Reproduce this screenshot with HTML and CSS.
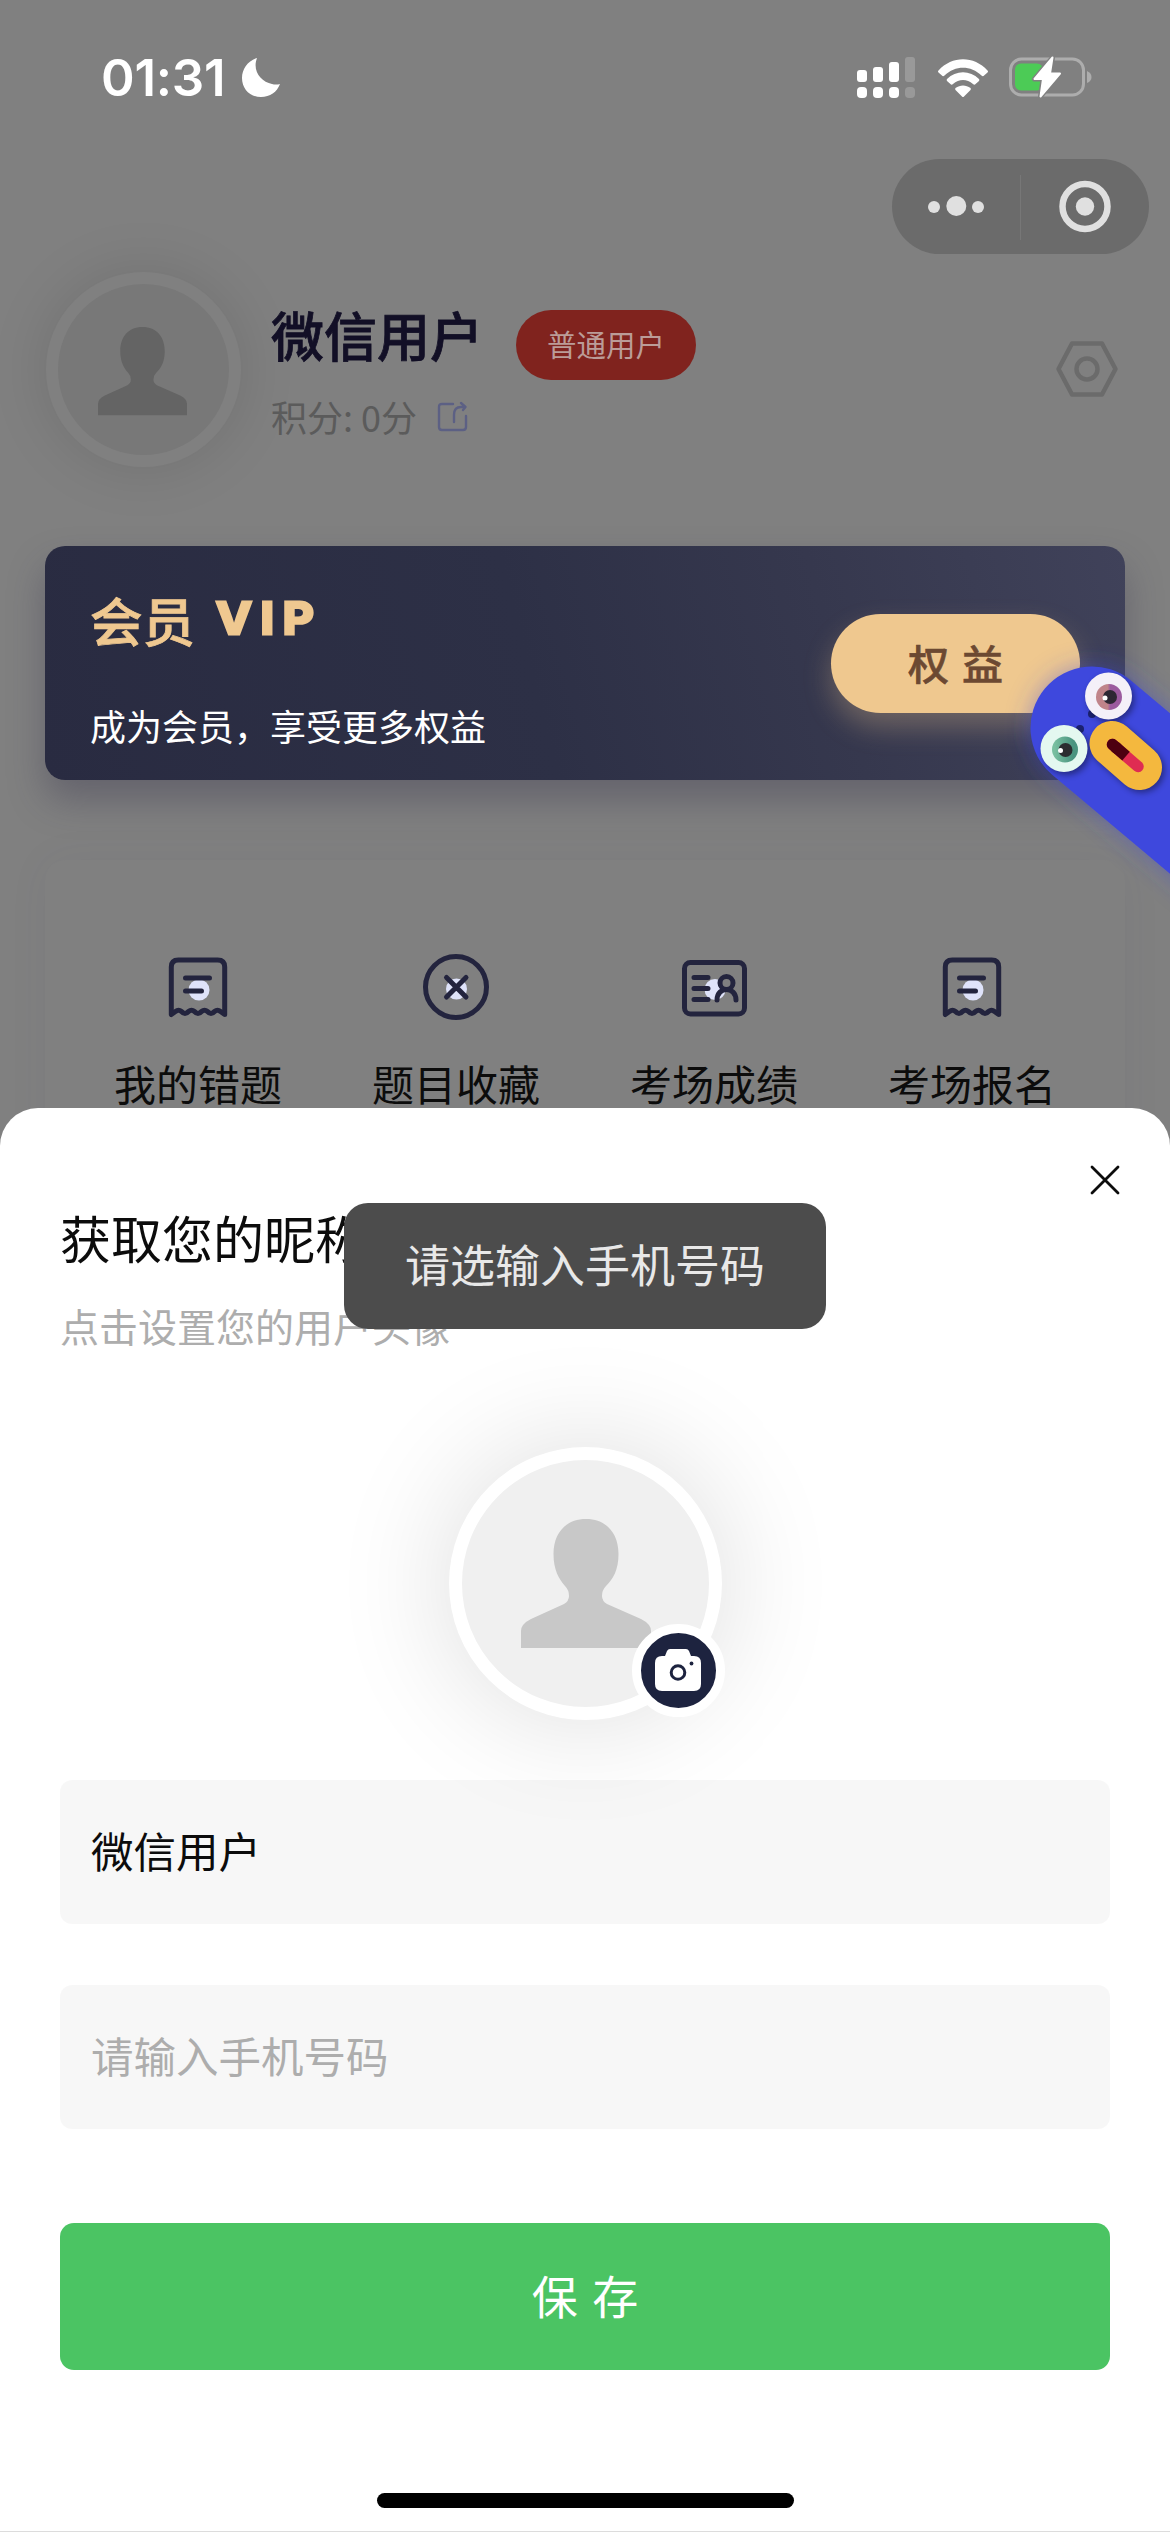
FILE: index.html
```html
<!DOCTYPE html>
<html lang="zh-CN">
<head>
<meta charset="utf-8">
<title>个人中心</title>
<link rel="stylesheet" href="styles.css">
</head>
<body>
<svg class="defs" width="0" height="0">
  <symbol id="person" viewBox="0 0 130 130">
    <path d="M65 0C44 0 32.500 15 32.500 35C32.500 51 38 60 44 67Q48 71 48 77Q48 82 43 85L10 100Q0 105 0 112V129H130V112Q130 105 120 100L86 85Q81 82 81 77Q81 71 85 67C92 60 97.500 51 97.500 35C97.500 15 86 0 65 0Z"/>
  </symbol>
  <symbol id="receipt" viewBox="0 0 66 66">
    <circle cx="34" cy="36" r="10.500" fill="#dfe3fa"/>
    <path d="M6.300 60.500V13Q6.300 6 13.300 6H52.700Q59.700 6 59.700 13V60.500L55.500 57.500Q52.500 55 49.500 57.500Q46 61.500 42.500 57.500Q39.500 55 36.500 57.500Q33 61.500 29.500 57.500Q26.500 55 23.500 57.500Q20 61.500 16.500 57.500Q13.500 55 10.500 57.500Z"/>
    <path d="M20.500 24H44.500M20.500 37H36.500"/>
  </symbol>
</svg>
<main class="screen">
  <header class="status">
    <div class="clock"><span>01:31</span>
      <svg width="40" height="40" viewBox="0 0 40 40"><path d="M16 0C7 3 1 11 1 20C1 31 9 39 20 39C29 39 36 34 39 26C37 26.500 34 27 31 26C20 24 11 13 16 0Z" fill="#fff"/></svg>
    </div>
    <div class="radio">
      <svg width="60" height="42" viewBox="0 0 60 42" fill="#fff">
        <rect x="0" y="13" width="10" height="12" rx="3"/><rect x="16" y="10" width="10" height="15" rx="3"/><rect x="32" y="5" width="10" height="20" rx="3"/><rect x="48" y="0" width="10" height="25" rx="3" opacity=".2"/>
        <rect x="0" y="30" width="10" height="11" rx="4"/><rect x="16" y="30" width="10" height="11" rx="4"/><rect x="32" y="30" width="10" height="11" rx="4"/><rect x="48" y="30" width="10" height="11" rx="4" opacity=".2"/>
      </svg>
      <svg width="52" height="40" viewBox="0 0 52 40" fill="#fff">
        <path d="M1.500 11.500C15-3.500 37-3.500 50.500 11.500Q51.500 12.500 50.500 13.500L46.500 17Q45.500 17.500 44.500 16.500C34 6 18 6 7.500 16.500Q6.500 17.500 5.500 17L1.500 13.500Q.5 12.500 1.500 11.500Z"/>
        <path d="M10 20C19 11 33 11 42 20Q42.700 21 42 22L38 25.500Q37 26 36 25C30 19.500 22 19.500 16 25Q15 26 14 25.500L10 22Q9.300 21 10 20Z"/>
        <path d="M18.500 29C23 25.500 29 25.500 33.500 29Q34.300 30 33.500 31L27 37.500Q26 38.500 25 37.500L18.500 31Q17.700 30 18.500 29Z"/>
      </svg>
      <svg width="84" height="44" viewBox="0 0 84 44">
        <rect x="1.500" y="4" width="73" height="36" rx="11" fill="none" stroke="#adadad" stroke-width="3"/>
        <path d="M78 16Q82.500 18 82.500 22T78 28Z" fill="#adadad"/>
        <rect x="6" y="8.500" width="28" height="27" rx="6" fill="#4ccb56"/>
        <path d="M43.500 2.500L25.500 24H34L31.500 41.500L51 18.500H41Z" fill="#fff" stroke="#808080" stroke-width="5" stroke-linejoin="round"/>
        <path d="M43.500 2.500L25.500 24H34L31.500 41.500L51 18.500H41Z" fill="#fff" stroke="#fff" stroke-width="2" stroke-linejoin="round"/>
      </svg>
    </div>
  </header>

  <nav class="capsule">
    <svg width="257" height="95" viewBox="0 0 257 95" fill="#e0e0e0">
      <circle cx="42" cy="48" r="6"/><circle cx="64.300" cy="47" r="10"/><circle cx="86" cy="48" r="6"/>
      <path d="M128.500 16V81" stroke="#777" stroke-width="1"/>
      <circle cx="193" cy="47.500" r="22.500" fill="none" stroke="#e0e0e0" stroke-width="6.500"/><circle cx="193" cy="47.500" r="9.200"/>
    </svg>
  </nav>

  <section class="profile">
    <div class="avatar"><svg width="89" height="89"><use href="#person"/></svg></div>
    <div class="who">
      <div class="name-row"><h1>微信用户</h1><span class="level">普通用户</span></div>
      <div class="points"><span>积分: 0分</span>
        <svg width="32" height="32" viewBox="0 0 32 32" fill="none" stroke="#5c6084" stroke-width="2.400" stroke-linecap="round" stroke-linejoin="round"><path d="M16 3H5Q2 3 2 6V26Q2 29 5 29H26Q29 29 29 26V15"/><path d="M17 21V14Q17 6 24 6H28M24 2L28.500 6L26 9"/></svg>
      </div>
    </div>
    <svg class="gear" width="64" height="60" viewBox="0 0 64 60" fill="none" stroke="#6b6b6b" stroke-width="4.500" stroke-linejoin="round"><path d="M17 4.500H47L60.500 30L47 55.500H17L3.500 30Z"/><circle cx="32" cy="30" r="10.500"/></svg>
  </section>

  <section class="vip">
    <div class="vip-text">
      <h2>会员<span>VIP</span></h2>
      <p>成为会员，享受更多权益</p>
    </div>
    <button class="perks">权 益</button>
  </section>

  <section class="menu">
    <div class="item"><svg class="line" width="66" height="66"><use href="#receipt"/></svg><span>我的错题</span></div>
    <div class="item"><svg class="line" width="66" height="66" viewBox="0 0 66 66"><circle cx="33.500" cy="35" r="10.500" fill="#dfe3fa" stroke="none"/><circle cx="33" cy="33" r="30.500"/><path d="M23.500 23.500L43 43M43 23.500L23.500 43"/></svg><span>题目收藏</span></div>
    <div class="item"><svg class="line" width="66" height="66" viewBox="0 0 66 66"><circle cx="34" cy="35.500" r="10.500" fill="#dfe3fa" stroke="none"/><rect x="3.500" y="8.500" width="60" height="51.500" rx="6"/><path d="M13 23.500H27M13 34.500H27M13 45.500H27M36 46C36 32 55 32 55 46"/><circle cx="45.500" cy="29" r="6.500" fill="#808080"/></svg><span>考场成绩</span></div>
    <div class="item"><svg class="line" width="66" height="66"><use href="#receipt"/></svg><span>考场报名</span></div>
  </section>

  <svg class="mascot" width="190" height="290" viewBox="0 0 190 290">
    <defs>
      <filter id="glow" filterUnits="userSpaceOnUse" x="920" y="560" width="500" height="500"><feGaussianBlur stdDeviation="13"/></filter>
      <filter id="soft" filterUnits="userSpaceOnUse" x="1000" y="640" width="220" height="220"><feGaussianBlur stdDeviation="3"/></filter>
      <linearGradient id="iris1"><stop offset=".45" stop-color="#c0848a"/><stop offset=".55" stop-color="#9b5a9e"/></linearGradient>
      <linearGradient id="iris2"><stop offset=".1" stop-color="#78bfa0"/><stop offset=".8" stop-color="#4a9480"/></linearGradient>
    </defs>
    <g transform="translate(-980 -610)">
      <path d="M1092 728L1260 869" stroke="#3e48dd" stroke-opacity=".5" stroke-width="120" stroke-linecap="round" filter="url(#glow)"/>
      <path d="M1092 728L1260 869" stroke="#3e48dd" stroke-width="123" stroke-linecap="round"/>
      <circle cx="1092" cy="714" r="4" fill="#1c2272"/><circle cx="1080" cy="729" r="4" fill="#1c2272"/>
      <g filter="url(#soft)" opacity=".4"><circle cx="1111" cy="699" r="23.500"/><circle cx="1067" cy="752" r="23"/><path d="M1114 746L1142 770" stroke="#000" stroke-width="45" stroke-linecap="round"/></g>
      <circle cx="1108.500" cy="696" r="23.500" fill="#f4f0f8"/><circle cx="1109" cy="697" r="13" fill="url(#iris1)"/><circle cx="1110" cy="697" r="7" fill="#2d2733"/><circle cx="1105" cy="698" r="2.500" fill="#fff"/>
      <circle cx="1064" cy="748.500" r="23.500" fill="#e4f8f0"/><circle cx="1065" cy="749.500" r="13" fill="url(#iris2)"/><circle cx="1065.500" cy="750" r="7" fill="#2b2d30"/><circle cx="1060.500" cy="750.500" r="2.500" fill="#fff"/>
      <path d="M1112 743.500L1139.500 767.500" stroke="#f4b83e" stroke-width="45" stroke-linecap="round"/>
      <path d="M1112.500 744.500L1138 766.500" stroke="#df2c52" stroke-width="11.500" stroke-linecap="round"/>
      <path d="M1112.500 744.500L1117 748.400" stroke="#4d0010" stroke-width="11.500" stroke-linecap="round"/><path d="M1115 746.700L1126 756.200" stroke="#4d0010" stroke-width="11.500"/>
    </g>
  </svg>

  <section class="sheet">
    <div class="close"><svg width="30" height="30" viewBox="0 0 30 30"><path d="M2 2L28 28M28 2L2 28" stroke="#0c0c0c" stroke-width="2.800" stroke-linecap="round"/></svg></div>
    <h3>获取您的昵称</h3>
    <p class="hint">点击设置您的用户头像</p>
    <div class="portrait">
      <svg width="130" height="130"><use href="#person"/></svg>
      <span class="camera"><svg width="46" height="43" viewBox="0 0 46 43"><path d="M7 7H10L12 2Q13 0 15 0H31Q33 0 34 2L36 7H39Q46 7 46 14V35Q46 42 39 42H7Q0 42 0 35V14Q0 7 7 7Z" fill="#fff"/><circle cx="23" cy="23.500" r="6.800" fill="none" stroke="#1d233f" stroke-width="3"/><circle cx="36.500" cy="14.500" r="1.900" fill="#1d233f"/></svg></span>
    </div>
    <div class="field">微信用户</div>
    <div class="field empty">请输入手机号码</div>
    <button class="save">保 存</button>
    <div class="home"></div>
  </section>

  <div class="toast">请选输入手机号码</div>
</main>
</body>
</html>
```
FILE: styles.css
```css
* { box-sizing: border-box; margin: 0; padding: 0; }
body { background: #808080; }
.defs { display: block; }
button { border: 0; font: inherit; }
svg { display: block; flex: none; }
.screen {
  position: relative; width: 1170px; height: 2532px; overflow: hidden;
  background: #808080; color: #0c0c0c;
  font-family: "Noto Sans CJK SC", sans-serif;
}

.status { display: flex; justify-content: space-between; height: 159px; padding: 55px 77px 0 101px; }
.clock { display: flex; gap: 14px; height: 46px; align-items: center; }
.clock span { font: 600 51px/46px Inter, sans-serif; color: #fff; letter-spacing: -.2px; width: 126px; white-space: nowrap; }
.radio { display: flex; align-items: flex-start; height: 44px; }
.radio svg:nth-child(1) { margin: 2px 20px 0 0; }
.radio svg:nth-child(2) { margin: 4px 20px 0 0; }

.capsule { width: 257px; height: 95px; margin-left: 892px; border-radius: 48px; background: #6b6b6b; }

.profile { display: flex; align-items: flex-start; height: 292px; padding: 18px 51px 0 46px; }
.avatar {
  width: 195px; height: 195px; border: 12px solid #808080; border-radius: 50%; background: #787878;
  display: flex; justify-content: center; padding: 43px 2px 0 0; color: #646464; box-shadow: 0 0 60px rgba(0, 0, 0, .12);
}
.avatar svg, .portrait > svg { fill: currentColor; }
.who { flex: 1; padding: 31px 0 0 30px; }
.name-row { display: flex; align-items: center; gap: 33px; height: 84px; }
h1 { font-size: 53px; line-height: 70px; font-weight: 500; color: #120f26; margin-top: -23px; -webkit-text-stroke: .8px #120f26; }
.level { width: 180px; height: 70px; border-radius: 35px; background: #80231e; color: #bb9c98; font-size: 29.500px; line-height: 67px; text-align: center; margin-top: -1px; }
.points { display: flex; align-items: center; gap: 20px; font-size: 36px; line-height: 46px; color: #5b5b5b; margin-top: 8px; }
.points span { margin-top: -2px; }
.gear { margin-top: 67px; }

.vip {
  display: flex; justify-content: space-between; width: 1080px; height: 234px; margin: 0 45px;
  padding: 42px 45px 0 45px; border-radius: 20px;
  background: linear-gradient(75deg, #292b41, #2d3046 45%, #36384e 72%, #40425a);
  box-shadow: 0 20px 36px rgba(50, 46, 72, .35);
}
h2 { display: flex; align-items: center; gap: 21px; font-size: 52.500px; line-height: 62px; font-weight: 500; color: #efc890; -webkit-text-stroke: .8px #efc890; }
h2 span { font: 700 44px/62px Inter, sans-serif; letter-spacing: 8px; -webkit-text-stroke: 3px #efc890; transform: scaleX(1.090); transform-origin: left; margin-top: -2px; }
.vip-text p { font-size: 36px; line-height: 50px; color: #fff; margin-top: 50px; white-space: nowrap; }
.perks { width: 249px; height: 99px; margin-top: 26px; padding-bottom: 4px; border-radius: 50px; background: #efc88f; color: #6c4932; font-size: 41px; font-weight: 500; word-spacing: 4px; -webkit-text-stroke: .6px #6c4932; box-shadow: 0 14px 28px rgba(239, 200, 143, .3); }

.menu { display: flex; height: 400px; margin: 80px 45px 0; padding: 94px 24px 0; border-radius: 20px; background: #808080; box-shadow: 0 0 40px rgba(70, 70, 95, .06); }
.item { flex: 1; display: flex; flex-direction: column; align-items: center; gap: 33px; font-size: 42px; line-height: 60px; }
.line { fill: none; stroke: #23243e; stroke-width: 5; stroke-linecap: round; stroke-linejoin: round; }
#receipt circle { stroke: none; }

.mascot { position: absolute; left: 980px; top: 610px; overflow: visible; }

.sheet { position: absolute; left: 0; right: 0; bottom: 0; height: 1424px; border-radius: 38px 38px 0 0; background: #fff; padding: 0 60px; border-bottom: 1px solid #dcdcdc; display: flex; flex-direction: column; }
.close { display: flex; justify-content: flex-end; padding: 57px 0 0; margin-right: -10px; height: 94px; }
h3 { font-size: 51px; line-height: 70px; font-weight: 400; }
.hint { font-size: 39px; line-height: 56px; color: #adadad; margin-top: 25px; }
.portrait { position: relative; align-self: center; width: 273px; height: 273px; margin-top: 94px; border: 13px solid #fff; border-radius: 50%; background: #f0f0f0; color: #c8c8c8; padding: 59px 0 0 59px; box-shadow: 0 0 120px rgba(0, 0, 0, .14); }
.camera { position: absolute; left: 170px; top: 164px; width: 93px; height: 93px; border: 9px solid #fff; border-radius: 50%; background: #1d233f; display: flex; align-items: center; justify-content: center; }
.field { height: 144px; margin-top: 60px; padding-left: 31px; border-radius: 12px; background: rgba(0, 0, 0, .032); font-size: 42.500px; line-height: 139px; }
.field.empty { margin-top: 61px; color: #adadad; }
.save { height: 147px; margin-top: 94px; padding-bottom: 5px; border-radius: 14px; background: #4bc463; color: #fff; font-size: 46px; word-spacing: 4px; }
.home { width: 417px; height: 15px; margin: 123px auto 0; border-radius: 8px; background: #000; }

.toast { position: absolute; left: 344px; top: 1203px; width: 482px; height: 126px; border-radius: 24px; background: #4c4c4c; color: #e8e8e8; font-size: 45px; line-height: 121px; text-align: center; }
```
